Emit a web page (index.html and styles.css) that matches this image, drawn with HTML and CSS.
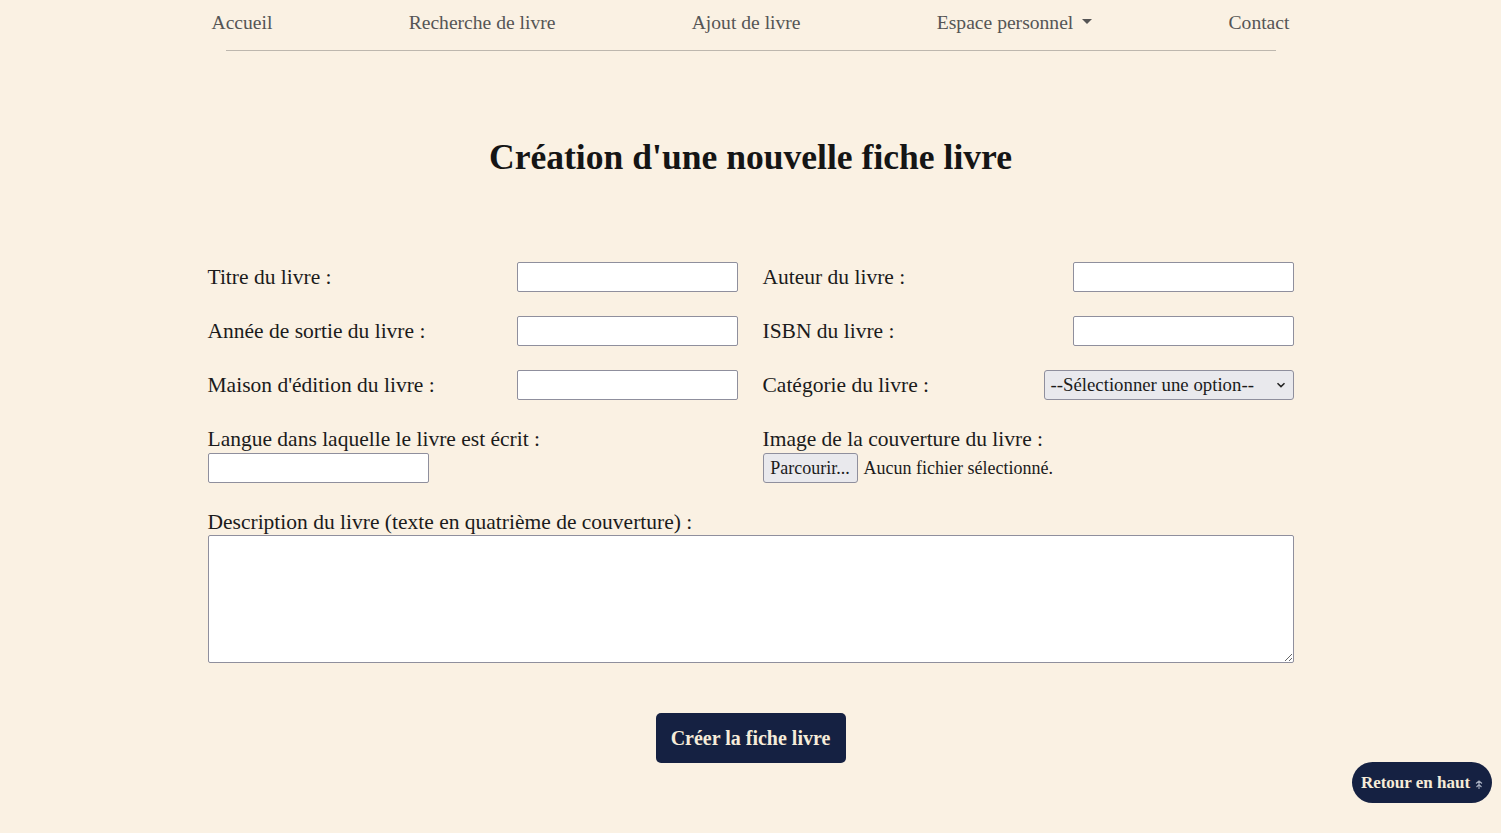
FILE: index.html
```html
<!DOCTYPE html>
<html lang="fr">
<head>
<meta charset="utf-8">
<title>Création d'une nouvelle fiche livre</title>
<link rel="stylesheet" href="styles.css">
</head>
<body>
<header class="site-header">
  <nav class="nav">
    <a class="nav-link" href="#">Accueil</a>
    <a class="nav-link" href="#">Recherche de livre</a>
    <a class="nav-link" href="#">Ajout de livre</a>
    <a class="nav-link" href="#">Espace personnel <span class="caret"></span></a>
    <a class="nav-link" href="#">Contact</a>
  </nav>
  <div class="nav-rule"></div>
</header>
<main class="main">
  <h1 class="title">Création d'une nouvelle fiche livre</h1>
  <form class="form">
    <div class="grid">
      <div class="field">
        <label class="label">Titre du livre :</label>
        <input class="input" type="text">
      </div>
      <div class="field">
        <label class="label">Auteur du livre :</label>
        <input class="input" type="text">
      </div>
      <div class="field">
        <label class="label">Année de sortie du livre :</label>
        <input class="input" type="text">
      </div>
      <div class="field">
        <label class="label">ISBN du livre :</label>
        <input class="input" type="text">
      </div>
      <div class="field">
        <label class="label">Maison d'édition du livre :</label>
        <input class="input" type="text">
      </div>
      <div class="field">
        <label class="label">Catégorie du livre :</label>
        <div class="select">--Sélectionner une option--<svg class="chev" width="10" height="6" viewBox="0 0 10 6"><path d="M1.5 1.2 L5 4.6 L8.5 1.2" fill="none" stroke="#222" stroke-width="1.5"/></svg></div>
      </div>
      <div class="field stacked">
        <label class="label">Langue dans laquelle le livre est écrit :</label>
        <input class="input" type="text">
      </div>
      <div class="field stacked">
        <label class="label">Image de la couverture du livre :</label>
        <div class="file"><span class="file-btn">Parcourir...</span><span class="file-text">Aucun fichier sélectionné.</span></div>
      </div>
    </div>
    <div class="desc">
      <label class="label">Description du livre (texte en quatrième de couverture) :</label>
      <textarea class="textarea"></textarea>
    </div>
    <div class="actions">
      <button class="submit" type="button">Créer la fiche livre</button>
    </div>
  </form>
</main>
<a class="back-top" href="#">Retour en haut <svg class="arrow" width="8" height="9" viewBox="0 0 8 9"><path d="M1 3.5 L4 1 L7 3.5 M1.5 7 L4 4.5 L6.5 7 M4 1 L4 9" fill="none" stroke="#a9b0c2" stroke-width="1.1"/></svg></a>
</body>
</html>
```
FILE: styles.css
```css
* { box-sizing: border-box; }
html, body { margin: 0; padding: 0; }
body {
  background: #faf1e3;
  font-family: "Liberation Serif", "Times New Roman", serif;
  color: #1b1b1b;
  min-height: 833px;
}
.site-header {
  width: 1086px;
  margin: 0 auto;
  padding-top: 9px;
}
.nav {
  display: flex;
  justify-content: space-between;
  align-items: center;
  padding: 0 4px;
  height: 28px;
}
.nav-link {
  color: #555;
  text-decoration: none;
  font-size: 19.6px;
  display: inline-flex;
  align-items: center;
}
.caret {
  display: inline-block;
  width: 0; height: 0;
  margin-left: 9px;
  border-left: 5px solid transparent;
  border-right: 5px solid transparent;
  border-top: 5px solid #555;
  transform: translateY(-2px);
}
.nav-rule {
  margin: 13px 18px 0;
  height: 1px;
  background: #bdb7ae;
}
.main {
  width: 1086px;
  margin: 0 auto;
}
.title {
  text-align: center;
  font-size: 35.6px;
  font-weight: bold;
  margin: 86px 0 0;
  line-height: 40px;
  color: #151515;
}
.form { margin-top: 85px; }
.grid {
  display: grid;
  grid-template-columns: 530px 531px;
  column-gap: 25px;
  row-gap: 24px;
}
.field {
  display: flex;
  justify-content: space-between;
  align-items: center;
  height: 30px;
}
.field.stacked {
  display: flex;
  flex-direction: column;
  align-items: flex-start;
  justify-content: flex-start;
  height: auto;
}
.label {
  font-size: 21.5px;
  line-height: 24px;
  color: #1b1b1b;
}
.stacked .label { margin-top: 3px; margin-bottom: 2px; }
.input {
  width: 221px;
  height: 30px;
  background: #fff;
  border: 1px solid #8f8f9d;
  border-radius: 2px;
  font-family: inherit;
}
.select {
  width: 250px;
  height: 30px;
  background: #e9e9ed;
  border: 1px solid #8f8f9d;
  border-radius: 3px;
  display: flex;
  align-items: center;
  justify-content: space-between;
  padding: 0 7px 0 6px;
  font-size: 18.8px;
  color: #1b1b1b;
}
.file {
  display: flex;
  align-items: center;
  gap: 6px;
}
.file-btn {
  width: 95px;
  height: 30px;
  background: #e9e9ed;
  border: 1px solid #8f8f9d;
  border-radius: 3px;
  display: inline-flex;
  align-items: center;
  justify-content: center;
  font-size: 18px;
}
.file-text { font-size: 18px; }
.desc {
  margin-top: 27px;
  display: flex;
  flex-direction: column;
}
.desc .label { margin-bottom: 1px; }
.textarea {
  width: 1086px;
  height: 128px;
  background: #fff;
  border: 1px solid #8f8f9d;
  border-radius: 2px;
  resize: vertical;
}
.actions {
  display: flex;
  justify-content: center;
  margin-top: 50px;
}
.submit {
  width: 190px;
  height: 50px;
  background: #152142;
  color: #f6ecd9;
  border: none;
  border-radius: 5px;
  font-family: inherit;
  font-size: 20px;
  font-weight: bold;
}
.back-top {
  position: fixed;
  right: 9px;
  bottom: 30px;
  width: 140px;
  height: 41px;
  border-radius: 21px;
  background: #152142;
  color: #f6ecd9;
  text-decoration: none;
  font-size: 17px;
  font-weight: bold;
  display: flex;
  align-items: center;
  justify-content: center;
  gap: 5px;
}
.arrow { margin-top: 3px; }
```
